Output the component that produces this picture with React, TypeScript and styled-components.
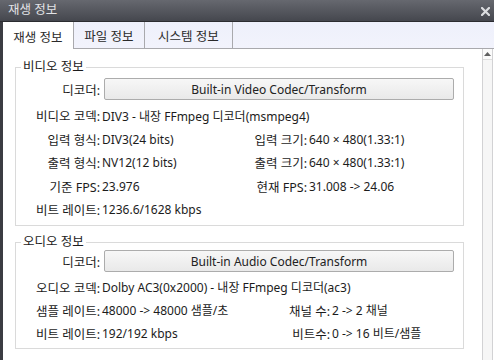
import React from "react";
import styled, { createGlobalStyle } from "styled-components";

const GlobalStyle = createGlobalStyle`
  * { box-sizing: border-box; }
  html, body { margin: 0; padding: 0; background: #ffffff; }
  body {
    font-family: "Noto Sans", "Noto Sans CJK KR", sans-serif;
    font-size: 12px;
    color: #1c1c1c;
  }
`;

type Pair = { label: string; value: string };
type InfoRow = { left: Pair; right?: Pair };

const videoRows: InfoRow[] = [
  { left: { label: "비디오 코덱:", value: "DIV3 - 내장 FFmpeg 디코더(msmpeg4)" } },
  {
    left: { label: "입력 형식:", value: "DIV3(24 bits)" },
    right: { label: "입력 크기:", value: "640 × 480(1.33:1)" },
  },
  {
    left: { label: "출력 형식:", value: "NV12(12 bits)" },
    right: { label: "출력 크기:", value: "640 × 480(1.33:1)" },
  },
  {
    left: { label: "기준 FPS:", value: "23.976" },
    right: { label: "현재 FPS:", value: "31.008 -> 24.06" },
  },
  { left: { label: "비트 레이트:", value: "1236.6/1628 kbps" } },
];

const audioRows: InfoRow[] = [
  { left: { label: "오디오 코덱:", value: "Dolby AC3(0x2000) - 내장 FFmpeg 디코더(ac3)" } },
  {
    left: { label: "샘플 레이트:", value: "48000 -> 48000 샘플/초" },
    right: { label: "채널 수:", value: "2 -> 2 채널" },
  },
  {
    left: { label: "비트 레이트:", value: "192/192 kbps" },
    right: { label: "비트수:", value: "0 -> 16 비트/샘플" },
  },
];

const tabs = ["재생 정보", "파일 정보", "시스템 정보"];
const tabWidths = [71, 71, 88];

interface SectionProps {
  title: string;
  decoder: string;
  rows: InfoRow[];
  leftWidth: number;
  rowHeight: number;
  buttonTop: number;
  rowsTop: number;
  spaced?: boolean;
}

const Section: React.FC<SectionProps> = ({
  title,
  decoder,
  rows,
  leftWidth,
  rowHeight,
  buttonTop,
  rowsTop,
  spaced,
}) => (
  <Group $spaced={spaced}>
    <Legend>{title}</Legend>
    <DecoderRow $top={buttonTop}>
      <Label $width={84}>디코더:</Label>
      <DecoderButton>{decoder}</DecoderButton>
    </DecoderRow>
    <Rows $top={rowsTop}>
      {rows.map((row) => (
        <Row key={row.left.label} $height={rowHeight}>
          <Cell $width={row.right ? leftWidth : undefined}>
            <Label $width={84}>{row.left.label}</Label>
            <Value>{row.left.value}</Value>
          </Cell>
          {row.right && (
            <Cell>
              <Label $width={91}>{row.right.label}</Label>
              <Value>{row.right.value}</Value>
            </Cell>
          )}
        </Row>
      ))}
    </Rows>
  </Group>
);

export default function App() {
  return (
    <>
      <GlobalStyle />
      <Window>
        <TitleBar>
          <Title>재생 정보</Title>
          <CloseIcon width="9" height="9" viewBox="0 0 9 9">
            <path d="M1 1 L8 8 M8 1 L1 8" stroke="#dcdde0" strokeWidth="2.2" strokeLinecap="square" />
          </CloseIcon>
        </TitleBar>
        <Panel>
          <TabBar>
            {tabs.map((t, i) => (
              <Tab key={t} $active={i === 0} $width={tabWidths[i]}>
                {t}
              </Tab>
            ))}
          </TabBar>
          <Content>
            <Main>
              <Section
                title="비디오 정보"
                decoder="Built-in Video Codec/Transform"
                rows={videoRows}
                leftWidth={200}
                rowHeight={23.5}
                buttonTop={3}
                rowsTop={4}
              />
              <Section
                title="오디오 정보"
                decoder="Built-in Audio Codec/Transform"
                rows={audioRows}
                leftWidth={223}
                rowHeight={23}
                buttonTop={0}
                rowsTop={3.5}
                spaced
              />
            </Main>
            <ScrollBar>
              <ScrollArrow>
                <svg width="7" height="4" viewBox="0 0 7 4">
                  <path d="M0 4 L3.5 0 L7 4 Z" fill="#606060" />
                </svg>
              </ScrollArrow>
            </ScrollBar>
          </Content>
        </Panel>
      </Window>
    </>
  );
}

// 스타일

const Window = styled.div`
  width: 494px;
  height: 360px;
  display: flex;
  flex-direction: column;
  overflow: hidden;
  background: #3b3c42;
`;

const TitleBar = styled.div`
  height: 22px;
  flex: none;
  display: flex;
  align-items: center;
  justify-content: space-between;
  padding: 0 4px 0 8px;
  background: linear-gradient(#66686f, #45474e);
  border-bottom: 1px solid #2b2c30;
`;

const Title = styled.span`
  color: #e2e3e6;
  font-size: 12.5px;
  line-height: 1;
`;

const CloseIcon = styled.svg`
  display: block;
  margin-top: 1px;
`;

const Panel = styled.div`
  flex: 1;
  display: flex;
  flex-direction: column;
  margin-left: 3px;
  background: #ffffff;
  min-height: 0;
`;

const TabBar = styled.div`
  height: 27px;
  flex: none;
  display: flex;
  align-items: flex-start;
  background: linear-gradient(#eef0fb, #f2f3fc);
  border-bottom: 1px solid #a9a9ad;
`;

const Tab = styled.div<{ $active?: boolean; $width: number }>`
  width: ${({ $width }) => $width}px;
  height: ${({ $active }) => ($active ? 27 : 26)}px;
  display: flex;
  align-items: center;
  justify-content: center;
  padding-top: 1px;
  border-right: 1px solid #a9a9ad;
  background: ${({ $active }) => ($active ? "#ffffff" : "transparent")};
  color: #2a2a2a;
  font-size: 12.5px;
  position: relative;
  z-index: ${({ $active }) => ($active ? 1 : 0)};
`;

const Content = styled.div`
  flex: 1;
  display: flex;
  min-height: 0;
`;

const Main = styled.div`
  flex: 1;
  padding: 10px 18px 0 12px;
`;

const ScrollBar = styled.div`
  width: 11px;
  flex: none;
  margin-right: 1px;
  background: #f6f6f6;
  border-left: 1px solid #d2d2d4;
  border-right: 1px solid #d2d2d4;
`;

const ScrollArrow = styled.div`
  height: 11px;
  display: flex;
  align-items: center;
  justify-content: center;
  border-bottom: 1px solid #dedede;
  background: #fbfbfb;
`;

const Group = styled.fieldset<{ $spaced?: boolean }>`
  margin: ${({ $spaced }) => ($spaced ? "8px 0 0" : "0")};
  padding: 0 0 3.5px;
  border: 1px solid #dadada;
  min-width: 0;
`;

const Legend = styled.legend`
  margin-left: 5px;
  padding: 0 2px;
  line-height: 16px;
  font-size: 12.5px;
`;

const DecoderRow = styled.div<{ $top: number }>`
  display: flex;
  align-items: center;
  margin-top: ${({ $top }) => $top}px;
`;

const DecoderButton = styled.div`
  width: 350px;
  height: 22px;
  margin-left: 4px;
  display: flex;
  align-items: center;
  justify-content: center;
  border: 1px solid #acacac;
  border-radius: 2px;
  background: linear-gradient(#f7f7f7, #e9e9e9);
  color: #222222;
`;

const Rows = styled.div<{ $top: number }>`
  margin-top: ${({ $top }) => $top}px;
`;

const Row = styled.div<{ $height: number }>`
  display: flex;
  align-items: center;
  height: ${({ $height }) => $height}px;
`;

const Cell = styled.div<{ $width?: number }>`
  display: flex;
  align-items: center;
  flex: ${({ $width }) => ($width ? "none" : "1")};
  width: ${({ $width }) => ($width ? `${$width}px` : "auto")};
  white-space: nowrap;
`;

const Label = styled.span<{ $width: number }>`
  width: ${({ $width }) => $width}px;
  flex: none;
  text-align: right;
  white-space: nowrap;
  font-size: 12.5px;
`;

const Value = styled.span`
  padding-left: 2px;
  white-space: nowrap;
`;
